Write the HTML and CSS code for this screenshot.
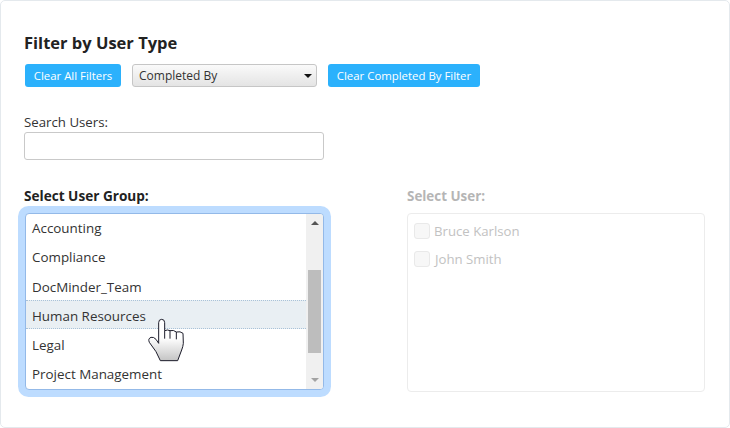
FILE: index.html
```html
<!DOCTYPE html>
<html lang="en">
<head>
<meta charset="utf-8">
<title>Filter by User Type</title>
<link rel="stylesheet" href="styles.css">
</head>
<body>
<main class="card">
  <h2 class="title">Filter by User Type</h2>
  <div class="toolbar">
    <button class="btn btn-clear-all" type="button">Clear All Filters</button>
    <div class="select"><span>Completed By</span><i class="select-arrow"></i></div>
    <button class="btn btn-clear-by" type="button">Clear Completed By Filter</button>
  </div>
  <label class="search-label">Search Users:</label>
  <div class="search-input"></div>
  <div class="columns">
    <section class="col-left">
      <h3 class="col-title">Select User Group:</h3>
      <div class="listbox">
        <ul class="rows">
          <li>Accounting</li>
          <li>Compliance</li>
          <li>DocMinder_Team</li>
          <li class="hover">Human Resources</li>
          <li>Legal</li>
          <li>Project Management</li>
        </ul>
        <div class="scrollbar">
          <i class="arrow-up"></i>
          <div class="track"><div class="thumb"></div></div>
          <i class="arrow-down"></i>
        </div>
        <svg class="cursor" width="70" height="60" viewBox="0 0 210 180" aria-hidden="true">
          <defs>
            <linearGradient id="hand" x1="0" y1="0" x2="0" y2="1">
              <stop offset="0.45" stop-color="#ffffff"/>
              <stop offset="1" stop-color="#c4c4c4"/>
            </linearGradient>
          </defs>
          <path d="M83 38Q83 28 92 28Q101 28 101 38L101 62Q110 58 117 62Q128 59 136 66Q148 63 156 70L157 100Q156 110 152 120L140 152L88 152L75 125L55 97Q50 86 60 82Q68 80 75 88L83 100Z" fill="url(#hand)" stroke="#1c1c2a" stroke-width="3" stroke-linejoin="round"/>
          <path d="M101 62L101 86M117 62L117 86M136 66L136 88" fill="none" stroke="#1c1c2a" stroke-width="3"/>
        </svg>
      </div>
    </section>
    <section class="col-right">
      <h3 class="col-title disabled">Select User:</h3>
      <div class="user-panel">
        <div class="user"><i class="check"></i><span>Bruce Karlson</span></div>
        <div class="user"><i class="check"></i><span class="john">John Smith</span></div>
      </div>
    </section>
  </div>
</main>
</body>
</html>
```

FILE: styles.css
```css
* { box-sizing: border-box; }
html, body { margin: 0; padding: 0; background: #fff; }
body {
  width: 730px;
  height: 428px;
  overflow: hidden;
  font-family: "Open Sans", "Noto Sans", sans-serif;
  color: #222;
}
.card {
  width: 730px;
  height: 428px;
  border: 1px solid #e4e9ed;
  border-radius: 5px;
  padding: 32px 24px 0 23px;
}
.title {
  margin: 0;
  font-size: 16.5px;
  line-height: 20px;
  font-weight: 700;
  color: #222;
}
.toolbar {
  display: flex;
  align-items: stretch;
  height: 23px;
  margin: 11px 0 0 1px;
}
.btn {
  border: 0;
  padding: 0;
  border-radius: 3px;
  background: #2bb1fc;
  color: #fff;
  font: 11.4px/23px "Open Sans", sans-serif;
  text-align: center;
}
.btn-clear-all { width: 96px; }
.btn-clear-by { width: 152px; margin-left: 11px; }
.select {
  width: 185px;
  margin-left: 11px;
  padding: 0 4px 0 6px;
  border: 1px solid #c6c6c6;
  border-radius: 3px;
  background: linear-gradient(#fafafa, #e4e4e4);
  font-size: 12px;
  line-height: 21px;
  color: #333;
  display: flex;
  align-items: center;
  justify-content: space-between;
}
.select-arrow {
  border-left: 4px solid transparent;
  border-right: 4px solid transparent;
  border-top: 4px solid #111;
}
.search-label {
  display: block;
  margin-top: 26px;
  margin-bottom: 1px;
  font-size: 13.25px;
  line-height: 18px;
  color: #333;
}
.search-input {
  width: 300px;
  height: 28px;
  border: 1px solid #c9c9c9;
  border-radius: 3px;
  background: #fff;
}
.columns {
  display: flex;
  margin-top: 27px;
}
.col-left { width: 383px; }
.col-right { width: 298px; }
.col-title {
  margin: 0;
  font-size: 13.6px;
  line-height: 18px;
  font-weight: 700;
  color: #222;
}
.col-title.disabled { color: #b5b5b5; font-size: 13.4px; }
.listbox {
  position: relative;
  width: 299px;
  height: 177px;
  margin-top: 8px;
  margin-left: 1px;
  display: flex;
  overflow: visible;
  border: 1px solid #93b9e8;
  border-radius: 4px;
  background: #fff;
  box-shadow: 0 0 0 7px #bddcff;
}
.rows {
  flex: 1;
  list-style: none;
  margin: 0;
  padding: 0;
  overflow: hidden;
  font-size: 13.4px;
  color: #333;
}
.rows li {
  height: 29.3px;
  line-height: 30px;
  padding-left: 6px;
  border: 1px solid transparent;
  border-width: 1px 0;
}
.rows li:first-child { margin-top: -2px; }
.rows li.hover {
  background: #e9eff3;
  border-top: 1px dotted #a9c2d8;
  border-bottom: 1px dotted #a9c2d8;
}
.scrollbar {
  width: 17px;
  background: #f0f0f0;
  display: flex;
  flex-direction: column;
  align-items: center;
  border-radius: 0 3px 3px 0;
}
.arrow-up, .arrow-down {
  flex: none;
  width: 0;
  height: 0;
  border-left: 4px solid transparent;
  border-right: 4px solid transparent;
}
.arrow-up { border-bottom: 4px solid #555; margin-top: 7px; }
.arrow-down { border-top: 4px solid #a3a3a3; margin-bottom: 7px; }
.track { flex: 1; width: 100%; padding: 45px 2px 0; }
.thumb { height: 83px; background: #bdbdbd; }
.cursor {
  position: absolute;
  left: 105px;
  top: 96px;
}
.user-panel {
  height: 179px;
  margin-top: 8px;
  padding: 9px 6px 0;
  border: 1px solid #ececec;
  border-radius: 4px;
}
.user {
  display: flex;
  align-items: center;
  height: 16px;
  margin-bottom: 12px;
  font-size: 13.2px;
  color: #c2c2c2;
}
.check {
  width: 16px;
  height: 16px;
  margin-right: 4px;
  border: 1px solid #e9e9e9;
  border-radius: 3px;
  background: #f7f7f7;
}
.john { margin-left: 1px; }
```
